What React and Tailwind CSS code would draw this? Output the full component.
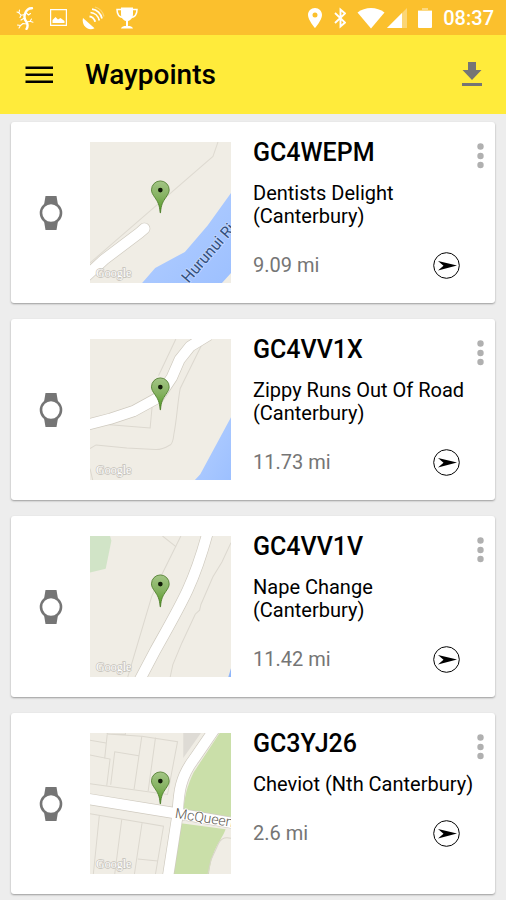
import React from "react";

const waypoints = [
  { code: "GC4WEPM", name: "Dentists Delight (Canterbury)", distance: "9.09 mi", map: RiverMap },
  { code: "GC4VV1X", name: "Zippy Runs Out Of Road (Canterbury)", distance: "11.73 mi", map: BendMap },
  { code: "GC4VV1V", name: "Nape Change (Canterbury)", distance: "11.42 mi", map: HighwayMap },
  { code: "GC3YJ26", name: "Cheviot (Nth Canterbury)", distance: "2.6 mi", map: TownMap },
];

/* Maps */
function MapTile({ label, children }) {
  return (
    <svg viewBox="0 0 422 422" role="img" aria-label={label} className="block h-[141px] w-[141px] shrink-0">
      <defs>
        <linearGradient id="pin" x1="0" y1="0" x2="0" y2="1">
          <stop offset="0" stopColor="#a3c585" />
          <stop offset="0.5" stopColor="#84b160" />
          <stop offset="1" stopColor="#4f9a1c" />
        </linearGradient>
        <linearGradient id="water" x1="0" y1="0" x2="1" y2="1">
          <stop offset="0" stopColor="#8fb6fb" />
          <stop offset="0.5" stopColor="#a9c8ff" />
          <stop offset="1" stopColor="#9dc0ff" />
        </linearGradient>
      </defs>
      <rect width="422" height="422" fill="#f0ede5" />
      {children}
      <path
        d="M210 212C208 186 202 178 194 166C188 157 184 152 184 143A26 26 0 0 1 237 143C237 152 233 157 227 166C219 178 213 186 211 212Z"
        fill="url(#pin)"
        stroke="#4b7a28"
        strokeWidth="2.5"
      />
      <circle cx="210.500" cy="144" r="7" fill="#111a08" />
      <text
        x="18"
        y="403"
        fontSize="36"
        fill="#ffffff"
        stroke="#c4c1b9"
        strokeWidth="4"
        paintOrder="stroke"
        className="font-['Liberation_Serif',serif]"
      >
        Google
      </text>
    </svg>
  );
}

function RiverMap() {
  return (
    <MapTile label="Map of GC4WEPM">
      <path d="M383 0L368 43L0 362" fill="none" stroke="#dedad1" strokeWidth="3" />
      <path d="M-10 400L42 352L148 272L163 259" fill="none" stroke="#cfcabf" strokeWidth="35" strokeLinecap="round" strokeLinejoin="round" />
      <path d="M-10 400L42 352L148 272L163 259" fill="none" stroke="#ffffff" strokeWidth="31" strokeLinecap="round" strokeLinejoin="round" />
      <path d="M422 153L352 250L284 329L195 377L156 422H395L422 392Z" fill="url(#water)" />
      <text
        x="295"
        y="424"
        fontSize="47"
        fill="#34517e"
        stroke="#c3d8ff"
        strokeWidth="5"
        paintOrder="stroke"
        transform="rotate(-49 295 424)"
        className="font-['Roboto',sans-serif]"
      >
        Hurunui Ri
      </text>
    </MapTile>
  );
}

function BendMap() {
  return (
    <MapTile label="Map of GC4VV1X">
      <g fill="none" stroke="#dcd8cf" strokeWidth="3">
        <path d="M257 0L205 110" />
        <path d="M333 20L270 148C262 190 260 240 251 285Q248 315 238 318Q215 332 195 331L110 326L18 317L0 328" />
        <path d="M187 190L180 266L50 256" />
        <path d="M0 388L8 422" />
      </g>
      <path d="M-10 257L60 239L130 216L205 175L245 115L268 62L300 22L355 -12" fill="none" stroke="#cfcabf" strokeWidth="35" strokeLinejoin="round" />
      <path d="M-10 257L60 239L130 216L205 175L245 115L268 62L300 22L355 -12" fill="none" stroke="#ffffff" strokeWidth="31" strokeLinejoin="round" />
      <path d="M422 234L330 405L314 422H422Z" fill="url(#water)" />
    </MapTile>
  );
}

function HighwayMap() {
  return (
    <MapTile label="Map of GC4VV1V">
      <path d="M0 0H60L64 14L47 98L0 109Z" fill="#d1e4c7" />
      <g fill="none" stroke="#dcd8cf" strokeWidth="3">
        <path d="M272 0L215 115L185 180L113 422" />
        <path d="M217 0L257 32" />
        <path d="M422 20L395 78L368 122L332 205L328 222L315 234L275 320L248 385L240 422" />
      </g>
      <path d="M352 -10C336 50 318 105 292 162C264 222 230 280 194 345L145 438" fill="none" stroke="#cfcabf" strokeWidth="35" />
      <path d="M352 -10C336 50 318 105 292 162C264 222 230 280 194 345L145 438" fill="none" stroke="#ffffff" strokeWidth="31" />
      <path d="M422 396L414 422H422Z" fill="#8fb6fb" />
    </MapTile>
  );
}

function TownMap() {
  return (
    <MapTile label="Map of GC3YJ26">
      <path d="M279 0H332L279 75Z" fill="#dedbd5" />
      <path d="M388 0H422V251L279 233C283 190 290 160 310 118Z" fill="#cadfa9" />
      <path d="M272 270L406 288C392 325 365 345 356 422H249Z" fill="#cadfa9" />
      <path d="M422 315Q396 308 385 330L362 380L353 422" fill="none" stroke="#d9d5ca" strokeWidth="3" />
      <g fill="none" stroke="#dcd8cf" strokeWidth="3">
        <path d="M52 0L44 76M106 0V4L50 3L155 10L262 26L232 184L0 152" />
        <path d="M0 22L48 30M0 66L60 78L50 158M62 155L74 56L146 68M155 10L132 168M196 14L174 174" />
        <path d="M0 242L220 279L196 422M28 246L10 422M95 259L74 422M156 268L133 422M143 377L203 383" />
      </g>
      <path d="M-10 197L250 239L432 270" fill="none" stroke="#cfcabf" strokeWidth="35" />
      <path d="M375 -15L312 77C264 140 266 190 262 245L233 432" fill="none" stroke="#cfcabf" strokeWidth="35" />
      <path d="M-10 197L250 239L432 270" fill="none" stroke="#ffffff" strokeWidth="31" />
      <path d="M375 -15L312 77C264 140 266 190 262 245L233 432" fill="none" stroke="#ffffff" strokeWidth="31" />
      <text
        x="253"
        y="254"
        fontSize="42"
        fill="#5c574f"
        stroke="#ffffff"
        strokeWidth="5"
        paintOrder="stroke"
        transform="rotate(9 253 254)"
        className="font-['Roboto',sans-serif] font-light"
      >
        McQueen
      </text>
    </MapTile>
  );
}

/* Status bar icons */
const LizardIcon = () => (
  <svg viewBox="0 0 24 24" className="h-6 w-6" fill="none" stroke="currentColor" strokeLinecap="round" strokeLinejoin="round">
    <path d="M19 2.200C15.500 2 13.500 4 12.300 7C10.800 10.500 11.200 13 13.200 15.500C15 18 15 20.500 13.500 23" strokeWidth="2.400" />
    <path d="M12 8.500L8 9.200L6 7M8 9.200L7 11.500" strokeWidth="1.100" />
    <path d="M12.800 6.500L15.500 9L17.500 7.500M11.500 12L8 14M6.500 4L6 6.800L4 6" strokeWidth="1.100" />
    <path d="M13.800 16L17 15.200L18.500 13M17 15.200L20 16.200M14 18L10 17.500L7.500 19.500L6 22M7.500 19.500L4.500 19" strokeWidth="1.100" />
  </svg>
);

const PictureIcon = () => (
  <svg viewBox="0 0 24 24" className="h-6 w-6" fill="currentColor">
    <path d="M3 3H20V20H3ZM4.200 4.200V18.800H18.800V4.200Z" fillRule="evenodd" />
    <path d="M5.500 17V14L8.500 11L11 13.500L13.500 12L17.500 15V17Z" />
  </svg>
);

const SatelliteIcon = () => (
  <svg viewBox="0 0 24 24" className="h-6 w-6" fill="none" stroke="currentColor" strokeWidth="1.700">
    <path d="M2 12L13.500 22.200C10 24.200 5.500 23 3.200 19.500C1.700 17.200 1.400 14.400 2 12Z" fill="currentColor" stroke="none" />
    <path d="M8.500 10.500C11 10.600 13.500 13 14.200 15.700" strokeWidth="2" />
    <path d="M9.500 6.500C13.500 6.800 17.200 10 18.300 14.500" />
    <path d="M11 3.200C16 3.500 20 7.500 21 12.500" />
    <path d="M14 1C19 2.500 22 6 23 10.500" opacity="0.35" strokeWidth="1.200" />
  </svg>
);

const TrophyIcon = () => (
  <svg viewBox="0 0 24 24" className="h-6 w-6" fill="currentColor">
    <path d="M6 1.500H18V8C18 12 15.500 14.500 13 15V20C15 20 17.500 20.500 18 22.500H6C6.500 20.500 9 20 11 20V15C8.500 14.500 6 12 6 8Z" />
    <path d="M6 3.500H2C2 8 4 11 8 11.500M18 3.500H22C22 8 20 11 16 11.500" fill="none" stroke="currentColor" strokeWidth="1.500" />
  </svg>
);

const LocationIcon = () => (
  <svg viewBox="0 0 16 22" className="h-[22px] w-4" fill="currentColor">
    <path d="M8 1C4 1 1 4 1 8C1 13 8 21 8 21C8 21 15 13 15 8C15 4 12 1 8 1ZM8 5.500A2.500 2.500 0 1 1 8 10.500A2.500 2.500 0 1 1 8 5.500Z" fillRule="evenodd" />
  </svg>
);

const BluetoothIcon = () => (
  <svg viewBox="0 0 12 22" className="h-[22px] w-3" fill="none" stroke="currentColor" strokeWidth="1.900">
    <path d="M1 6L11 15.500L6.500 19.500V2.500L11 6.500L1 16" />
  </svg>
);

const WifiIcon = () => (
  <svg viewBox="0 0 28 22" className="h-[22px] w-7" fill="currentColor">
    <path d="M14 21.500L0.500 5.500C8 -0.500 20 -0.500 27.500 5.500Z" />
  </svg>
);

const SignalIcon = () => (
  <svg viewBox="0 0 20 22" className="h-[22px] w-5" fill="currentColor">
    <path d="M20 1V21H0Z" opacity="0.35" />
    <path d="M15 6V21H0Z" />
  </svg>
);

const BatteryIcon = () => (
  <svg viewBox="0 0 14 22" className="h-[22px] w-[14px]" fill="currentColor">
    <path d="M4 1H10V3H14V5H0V3H4Z" opacity="0.4" />
    <path d="M0 4H14V20Q14 21 13 21H1Q0 21 0 20Z" />
  </svg>
);

const StatusBar = () => (
  <div className="flex h-[35px] items-center justify-between bg-[#fbc02d] pl-[13px] pr-3 text-white">
    <div className="flex items-center gap-[10px]">
      <LizardIcon />
      <PictureIcon />
      <SatelliteIcon />
      <TrophyIcon />
    </div>
    <div className="flex items-center gap-[11px]">
      <LocationIcon />
      <BluetoothIcon />
      <div className="flex gap-[2px]">
        <WifiIcon />
        <SignalIcon />
      </div>
      <BatteryIcon />
      <time className="text-[20px] leading-6 font-medium">08:37</time>
    </div>
  </div>
);

const AppBar = () => (
  <header className="flex h-[79px] items-center bg-[#ffeb3b] pl-[25px] pr-6">
    <button type="button" aria-label="Open menu" className="text-black">
      <svg viewBox="0 0 28 20" className="block h-5 w-7" stroke="currentColor" strokeWidth="2.400">
        <path d="M0.500 2.700H28M0.500 9.700H28M0.500 16.700H28" />
      </svg>
    </button>
    <h1 className="ml-8 flex-1 text-[28px] leading-8 font-medium text-black">Waypoints</h1>
    <button type="button" aria-label="Download" className="text-[#757575]">
      <svg viewBox="0 0 20 25" className="block h-[25px] w-5" fill="currentColor">
        <path d="M6 0H14V8H19.500L10 18L0.500 8H6ZM0 21H20V24H0Z" />
      </svg>
    </button>
  </header>
);

const WaypointCard = ({ waypoint }) => {
  const Map = waypoint.map;

  return (
    <li className="flex rounded-[3px] bg-white py-5 pr-[9px] shadow-[0_1px_2px_rgba(0,0,0,0.35)]">
      <button
        type="button"
        aria-label={`Send ${waypoint.code} to watch`}
        className="flex w-[79px] shrink-0 items-center justify-center text-[#757575]"
      >
        <svg viewBox="0 0 24 34" className="h-[34px] w-6" fill="currentColor">
          <path d="M6.500 0H17.500L19 9H5ZM5 25H19L17.500 34H6.500Z" />
          <circle cx="12" cy="17" r="10" fill="#ffffff" stroke="currentColor" strokeWidth="2.600" />
        </svg>
      </button>

      <Map />

      <div className="ml-[22px] min-w-0 flex-1">
        <h2 className="text-[25px] leading-[22px] font-medium text-black">{waypoint.code}</h2>
        <p className="mt-[18px] text-[20px] leading-[23px] text-black">{waypoint.name}</p>
        <div className="mt-[23px] flex h-7 items-center justify-between pr-[15px]">
          <span className="text-[20px] leading-7 text-[#757575]">{waypoint.distance}</span>
          <button type="button" aria-label={`Navigate to ${waypoint.code}`} className="text-black">
            <svg viewBox="0 0 27 27" className="block h-[27px] w-[27px]" fill="currentColor">
              <circle cx="13.500" cy="13.500" r="12.800" fill="none" stroke="currentColor" strokeWidth="1" />
              <path d="M5 9L24 13.500L5 18.500L10.500 13.800Z" />
            </svg>
          </button>
        </div>
      </div>

      <button type="button" aria-label={`More options for ${waypoint.code}`} className="flex w-[11px] shrink-0 justify-center self-start text-[#b0b0b0]">
        <svg viewBox="0 0 7 28" className="h-7 w-[7px]" fill="currentColor">
          <circle cx="3.500" cy="4.500" r="3.200" />
          <circle cx="3.500" cy="14" r="3.200" />
          <circle cx="3.500" cy="23" r="3.200" />
        </svg>
      </button>
    </li>
  );
};

export default function App() {
  return (
    <div className="min-h-screen bg-[#ededed] font-['Roboto',sans-serif]">
      <StatusBar />
      <AppBar />
      <main className="px-[11px] pt-2 pb-1">
        <ul className="flex flex-col gap-4">
          {waypoints.map((waypoint) => (
            <WaypointCard key={waypoint.code} waypoint={waypoint} />
          ))}
        </ul>
      </main>
    </div>
  );
}
